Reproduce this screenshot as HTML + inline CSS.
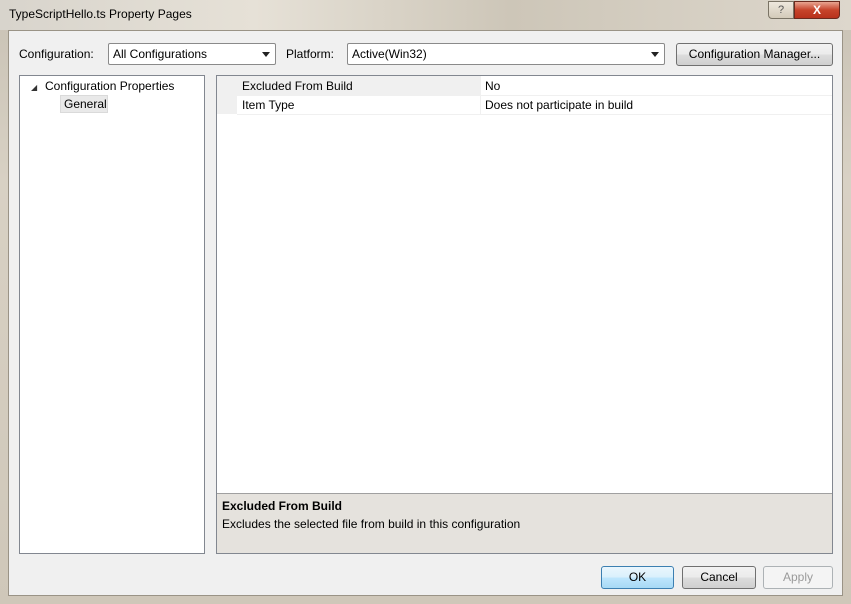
<!DOCTYPE html>
<html><head><style>
*{margin:0;padding:0;box-sizing:border-box}
body{width:851px;height:604px;overflow:hidden;font-family:"Liberation Sans",sans-serif;font-size:12px;color:#000;background:linear-gradient(#c9c2b5,#d8d1c4 30%,#cfc7b9);position:relative}
.a{position:absolute}
.combo{background:#fff;border:1px solid #8a8a8a;border-radius:2px;padding:2px 4px;height:22px;line-height:16px}
.combo:after{content:"";position:absolute;right:5px;top:8px;border:4px solid transparent;border-top:5px solid #222}
.btn{border:1px solid #707070;border-radius:3px;background:linear-gradient(#f2f2f2,#ebebeb 50%,#dddddd 51%,#cfcfcf);text-align:center;line-height:20px}
</style></head><body>
<div class="a" style="left:0;top:0;width:851px;height:30px;background:linear-gradient(90deg,#d8d4cc,#e6e1d7 30%,#cdc6b8 60%,#ddd7cc)"></div>
<div class="a" style="left:9px;top:7px;font-size:12px">TypeScriptHello.ts Property Pages</div>
<div class="a" style="left:768px;top:1px;width:26px;height:18px;border:1px solid #7a7365;border-radius:0 0 0 4px;background:linear-gradient(#eee8dd,#d3cab9);text-align:center;color:#555;font-size:11px;line-height:16px">?</div>
<div class="a" style="left:794px;top:1px;width:46px;height:18px;border:1px solid #6b2a1e;border-radius:0 0 4px 0;background:linear-gradient(#e8a591,#c7442b 50%,#b8321c);text-align:center;color:#fff;font-weight:bold;font-size:12px;line-height:16px">X</div>
<div class="a" style="left:8px;top:30px;width:835px;height:566px;background:#f0f0f0;border:1px solid #9a9386"></div>
<div class="a" style="left:19px;top:47px">Configuration:</div>
<div class="a combo" style="left:108px;top:43px;width:168px">All Configurations</div>
<div class="a" style="left:286px;top:47px">Platform:</div>
<div class="a combo" style="left:347px;top:43px;width:318px">Active(Win32)</div>
<div class="a btn" style="left:676px;top:43px;width:157px;height:23px">Configuration Manager...</div>
<div class="a" style="left:19px;top:75px;width:186px;height:479px;background:#fff;border:1px solid #828790"></div>
<div class="a" style="left:31px;top:83px;font-size:8px;color:#333">◢</div>
<div class="a" style="left:45px;top:79px">Configuration Properties</div>
<div class="a" style="left:60px;top:95px;width:48px;height:18px;background:#e9e9e9;border:1px solid #dadada"></div>
<div class="a" style="left:64px;top:97px">General</div>
<div class="a" style="left:216px;top:75px;width:617px;height:479px;background:#fff;border:1px solid #828790"></div>
<div class="a" style="left:217px;top:76px;width:20px;height:38px;background:#f0f0f0"></div>
<div class="a" style="left:237px;top:76px;width:243px;height:19px;background:#f0f0f0"></div>
<div class="a" style="left:237px;top:95px;width:595px;height:1px;background:#f0f0f0"></div>
<div class="a" style="left:237px;top:114px;width:595px;height:1px;background:#f0f0f0"></div>
<div class="a" style="left:480px;top:76px;width:1px;height:38px;background:#f0f0f0"></div>
<div class="a" style="left:242px;top:79px">Excluded From Build</div>
<div class="a" style="left:485px;top:79px">No</div>
<div class="a" style="left:242px;top:98px">Item Type</div>
<div class="a" style="left:485px;top:98px">Does not participate in build</div>
<div class="a" style="left:217px;top:493px;width:615px;height:60px;background:#e5e2dd;border-top:1px solid #a0a0a0"></div>
<div class="a" style="left:222px;top:499px;font-weight:bold">Excluded From Build</div>
<div class="a" style="left:222px;top:517px">Excludes the selected file from build in this configuration</div>
<div class="a btn" style="left:601px;top:566px;width:73px;height:23px;border-color:#3c7fb1;background:linear-gradient(#eaf6fd,#d9f0fc 50%,#bee6fd 51%,#a7d9f5)">OK</div>
<div class="a btn" style="left:682px;top:566px;width:74px;height:23px">Cancel</div>
<div class="a btn" style="left:763px;top:566px;width:70px;height:23px;background:#f4f4f4;border-color:#adb2b5;color:#9a9a9a">Apply</div>
</body></html>
